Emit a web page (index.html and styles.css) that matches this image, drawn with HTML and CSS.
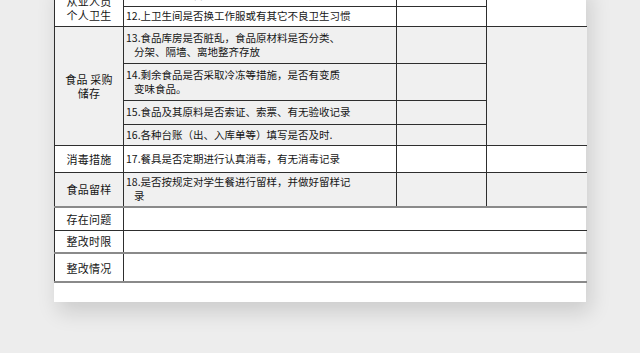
FILE: index.html
```html
<!DOCTYPE html>
<html lang="zh-CN">
<head>
<meta charset="utf-8">
<title>检查表</title>
<link rel="stylesheet" href="styles.css">
</head>
<body>
<div class="paper">
  <table class="sheet">
    <colgroup>
      <col class="c1"><col class="c2"><col class="c3"><col class="c4">
    </colgroup>
    <tr class="r11">
      <td class="label top-label" rowspan="2">从业人员<br>个人卫生</td>
      <td class="q">11.工作人员是否留长指甲、涂指甲油、戴戒指</td>
      <td></td>
      <td rowspan="2"></td>
    </tr>
    <tr class="r12">
      <td class="q">12.上卫生间是否换工作服或有其它不良卫生习惯</td>
      <td></td>
    </tr>
    <tr class="r13 grey">
      <td class="label" rowspan="4">食品 采购<br>储存</td>
      <td class="q">13.食品库房是否脏乱，食品原材料是否分类、<span class="cont">分架、隔墙、离地整齐存放</span></td>
      <td></td>
      <td rowspan="4"></td>
    </tr>
    <tr class="r14 grey">
      <td class="q">14.剩余食品是否采取冷冻等措施，是否有变质<span class="cont">变味食品。</span></td>
      <td></td>
    </tr>
    <tr class="r15 grey">
      <td class="q">15.食品及其原料是否索证、索票、有无验收记录</td>
      <td></td>
    </tr>
    <tr class="r16 grey">
      <td class="q">16.各种台账（出、入库单等）填写是否及时.</td>
      <td></td>
    </tr>
    <tr class="r17">
      <td class="label">消毒措施</td>
      <td class="q">17.餐具是否定期进行认真消毒，有无消毒记录</td>
      <td></td>
      <td></td>
    </tr>
    <tr class="r18 grey">
      <td class="label">食品留样</td>
      <td class="q">18.是否按规定对学生餐进行留样，并做好留样记<span class="cont">录</span></td>
      <td></td>
      <td></td>
    </tr>
    <tr class="r19 thick-top">
      <td class="label">存在问题</td>
      <td colspan="3"></td>
    </tr>
    <tr class="r20">
      <td class="label">整改时限</td>
      <td colspan="3"></td>
    </tr>
    <tr class="r21 thick-top thick-bottom">
      <td class="label">整改情况</td>
      <td colspan="3"></td>
    </tr>
  </table>
</div>
</body>
</html>
```
FILE: styles.css
```css
html, body {
  margin: 0;
  padding: 0;
}
body {
  background: #ededed;
  width: 640px;
  height: 353px;
  overflow: hidden;
  font-family: "Noto Sans CJK SC", "Microsoft YaHei", sans-serif;
  color: #151515;
}
.paper {
  margin-left: 54px;
  margin-top: -16px;
  width: 532px;
  background: #ffffff;
  padding-bottom: 19px;
  box-shadow: 4px 10px 20px rgba(0, 0, 0, 0.14);
}
.sheet {
  width: 532px;
  border-collapse: collapse;
  table-layout: fixed;
}
.c1 { width: 69px; }
.c2 { width: 273px; }
.c3 { width: 90px; }
.c4 { width: 100px; }
.sheet td {
  border: 1px solid #2e2e2e;
  padding: 0;
  vertical-align: middle;
  font-size: 10.5px;
  line-height: 14px;
}
.sheet tr > td:last-child {
  border-right: none;
}
.sheet tr:first-child td {
  border-top: none;
}
.sheet .label {
  text-align: center;
  font-size: 11px;
  letter-spacing: 0.2px;
}
.sheet .top-label {
  vertical-align: bottom;
  padding-bottom: 4px;
}
.sheet .q {
  padding-left: 2px;
  white-space: nowrap;
}
.cont {
  display: block;
  padding-left: 8px;
}
.sheet .grey td { background: #f0f0f0; }
.r11 { height: 22px; }
.r12 { height: 20px; }
.r13 { height: 37px; }
.r14 { height: 37px; }
.r15 { height: 24px; }
.r16 { height: 21px; }
.r17 { height: 27px; }
.r18 { height: 35px; }
.r19 { height: 23px; }
.r20 { height: 23px; }
.r21 { height: 29px; }
.sheet .thick-top td { border-top: 2px solid #8a8a8a; }
.sheet .thick-bottom td { border-bottom: 2px solid #8a8a8a; }
```
